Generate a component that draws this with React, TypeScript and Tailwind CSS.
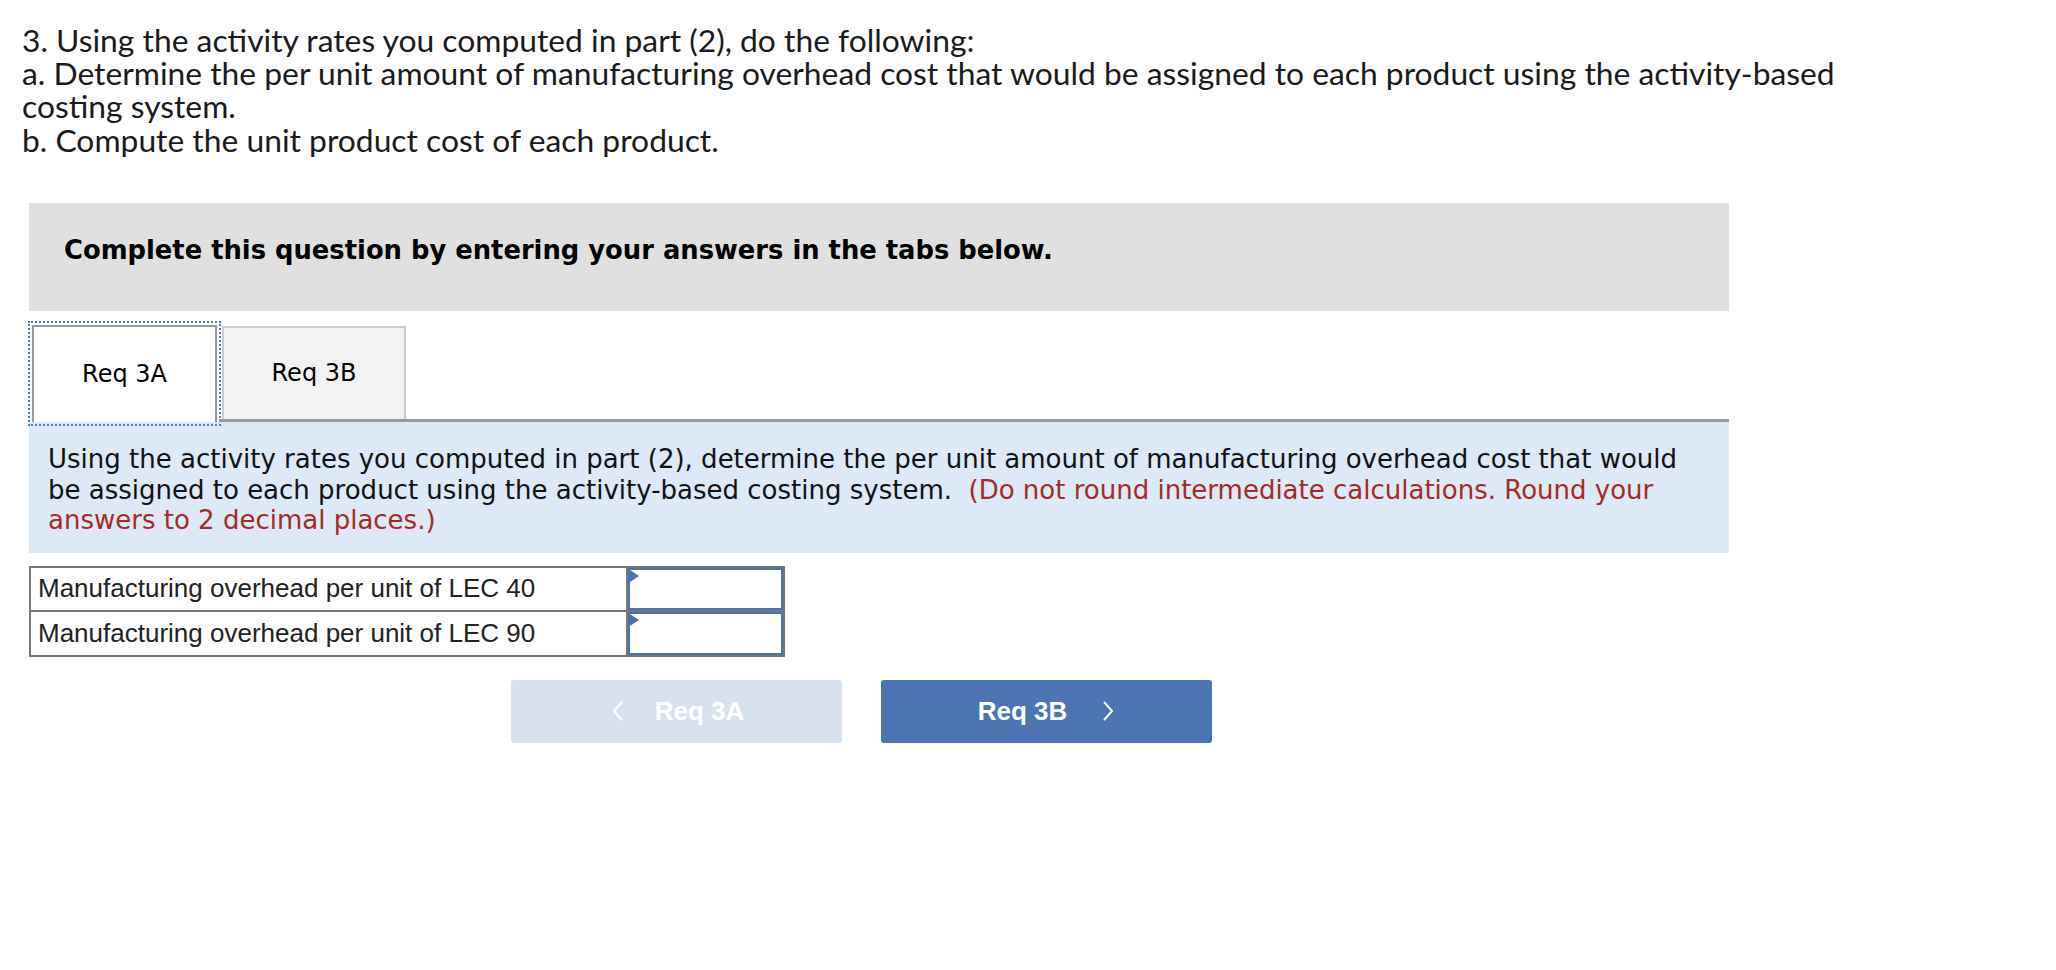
import React from "react";

function ChevronLeft() {
  return (
    <svg width="11" height="20" viewBox="0 0 11 20" fill="none">
      <path d="M9.5 1.5 L2 10 L9.5 18.5" stroke="currentColor" strokeWidth="2" strokeLinecap="round" strokeLinejoin="round" />
    </svg>
  );
}

function ChevronRight() {
  return (
    <svg width="11" height="20" viewBox="0 0 11 20" fill="none">
      <path d="M1.5 1.5 L9 10 L1.5 18.5" stroke="currentColor" strokeWidth="2" strokeLinecap="round" strokeLinejoin="round" />
    </svg>
  );
}

function InputCell() {
  return (
    <div className="relative w-[155px] border-2 border-[#4a72b0] bg-white">
      <svg className="absolute left-0 top-0" width="9" height="12" viewBox="0 0 9 12">
        <polygon points="0,0 9,6 0,12" fill="#4a72b0" />
      </svg>
    </div>
  );
}

export default function App() {
  const verdana = { fontFamily: '"DejaVu Sans", Verdana, sans-serif' };
  const arial = { fontFamily: '"Liberation Sans", Arial, sans-serif' };
  return (
    <div className="min-h-[970px] bg-white text-black">
      <div
        className="pl-[22px] pt-[24px] text-[31.8px] leading-[33.2px] text-[#1a1a1a]"
        style={{ fontFamily: 'Lato, "Open Sans", sans-serif' }}
      >
        <div>3. Using the activity rates you computed in part (2), do the following:</div>
        <div className="whitespace-nowrap">
          a. Determine the per unit amount of manufacturing overhead cost that would be assigned to each product using the activity-based
        </div>
        <div>costing system.</div>
        <div>b. Compute the unit product cost of each product.</div>
      </div>

      <div className="ml-[29px] mt-[46px] w-[1700px]">
        <div className="h-[108px] bg-[#e0e0e0] pl-[35px] pt-[31px]" style={verdana}>
          <div className="text-[25.8px] font-bold leading-[32px]">
            Complete this question by entering your answers in the tabs below.
          </div>
        </div>

        <div className="mt-[14px] flex h-[97px] pl-[3px]" style={verdana}>
          <div className="flex w-[185px] items-center justify-center border-2 border-b-0 border-[#999] bg-white text-[24px] outline-2 outline-offset-2 outline-[#4a7cc6] outline-dotted">
            Req 3A
          </div>
          <div className="ml-[2px] flex flex-1 border-b-[3px] border-[#999] pl-[3px]">
            <div className="mt-[1px] flex w-[184px] items-center justify-center border-2 border-b-0 border-[#ccc] bg-[#f2f2f2] text-[24px]">
              Req 3B
            </div>
          </div>
        </div>

        <div
          className="bg-[#dde9f6] pb-[17px] pl-[19px] pr-[20px] pt-[22px] text-[26px] leading-[30.7px] text-[#111]"
          style={verdana}
        >
          Using the activity rates you computed in part (2), determine the per unit amount of manufacturing overhead cost that would be assigned to each product using the activity-based costing system.{"\u00a0 "}
          <span className="text-[#a52a25]">
            (Do not round intermediate calculations. Round your answers to 2 decimal places.)
          </span>
        </div>

        <div className="mt-[13px] w-[756px] border-2 border-[#777] text-[26px] text-[#222]" style={arial}>
          <div className="flex h-[44px] border-b-2 border-[#777]">
            <div className="flex flex-1 items-center border-r-2 border-[#777] pl-[7px]">
              Manufacturing overhead per unit of LEC 40
            </div>
            <InputCell />
          </div>
          <div className="flex h-[43px]">
            <div className="flex flex-1 items-center border-r-2 border-[#777] pl-[7px]">
              Manufacturing overhead per unit of LEC 90
            </div>
            <InputCell />
          </div>
        </div>

        <div className="mt-[23px] flex justify-center gap-[39px] pr-[36px]" style={arial}>
          <button className="flex h-[63px] w-[331px] items-center justify-center gap-[32px] rounded-[3px] bg-[#d8e2ef] pl-[4px] text-[26px] font-bold text-white">
            <ChevronLeft />
            <span>Req 3A</span>
          </button>
          <button className="flex h-[63px] w-[331px] items-center justify-center gap-[36px] rounded-[3px] bg-[#4a74b2] text-[26px] font-bold text-white">
            <span>Req 3B</span>
            <ChevronRight />
          </button>
        </div>
      </div>
    </div>
  );
}
